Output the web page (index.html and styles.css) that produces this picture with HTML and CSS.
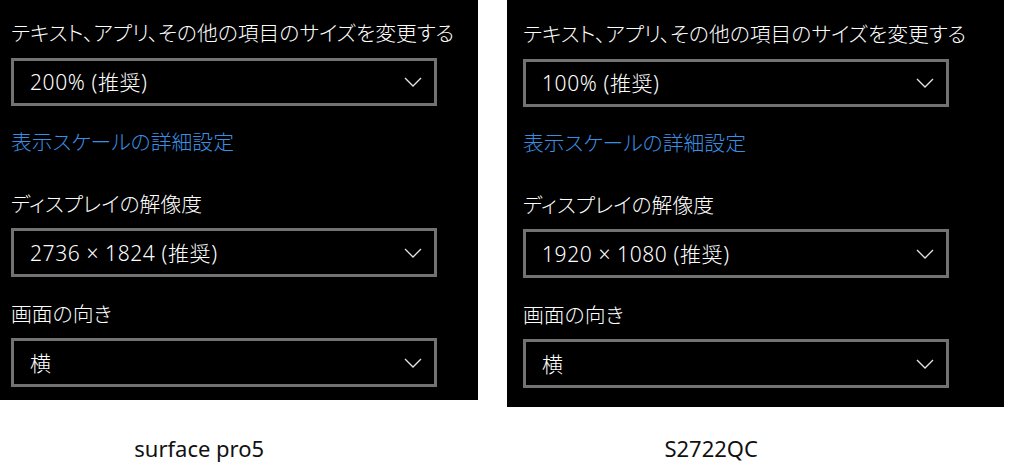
FILE: index.html
```html
<!DOCTYPE html>
<html lang="ja">
<head>
<meta charset="utf-8">
<title>Display settings comparison</title>
<link rel="stylesheet" href="styles.css">
</head>
<body>
<div class="row">
  <section class="panel panel-left">
    <div class="label title">テキスト、アプリ、その他の項目のサイズを変更する</div>
    <div class="combo combo-first"><span class="value">200% (推奨)</span><svg class="chev" viewBox="0 0 18 10" width="18" height="10"><path d="M1 1 L9 9 L17 1" fill="none" stroke="#e6e6e6" stroke-width="1.3"/></svg></div>
    <div class="link">表示スケールの詳細設定</div>
    <div class="label label-res">ディスプレイの解像度</div>
    <div class="combo"><span class="value">2736 × 1824 (推奨)</span><svg class="chev" viewBox="0 0 18 10" width="18" height="10"><path d="M1 1 L9 9 L17 1" fill="none" stroke="#e6e6e6" stroke-width="1.3"/></svg></div>
    <div class="label label-ori">画面の向き</div>
    <div class="combo"><span class="value">横</span><svg class="chev" viewBox="0 0 18 10" width="18" height="10"><path d="M1 1 L9 9 L17 1" fill="none" stroke="#e6e6e6" stroke-width="1.3"/></svg></div>
  </section>
  <section class="panel panel-right">
    <div class="label title">テキスト、アプリ、その他の項目のサイズを変更する</div>
    <div class="combo combo-first"><span class="value">100% (推奨)</span><svg class="chev" viewBox="0 0 18 10" width="18" height="10"><path d="M1 1 L9 9 L17 1" fill="none" stroke="#e6e6e6" stroke-width="1.3"/></svg></div>
    <div class="link">表示スケールの詳細設定</div>
    <div class="label label-res">ディスプレイの解像度</div>
    <div class="combo"><span class="value">1920 × 1080 (推奨)</span><svg class="chev" viewBox="0 0 18 10" width="18" height="10"><path d="M1 1 L9 9 L17 1" fill="none" stroke="#e6e6e6" stroke-width="1.3"/></svg></div>
    <div class="label label-ori">画面の向き</div>
    <div class="combo"><span class="value">横</span><svg class="chev" viewBox="0 0 18 10" width="18" height="10"><path d="M1 1 L9 9 L17 1" fill="none" stroke="#e6e6e6" stroke-width="1.3"/></svg></div>
  </section>
</div>
<div class="captions">
  <div class="caption caption-left">surface pro5</div>
  <div class="caption caption-right">S2722QC</div>
</div>
</body>
</html>
```
FILE: styles.css
```css
html, body {
  margin: 0;
  padding: 0;
  background: #ffffff;
}
body {
  width: 1024px;
  height: 474px;
  overflow: hidden;
  font-family: "Noto Sans CJK JP", "Noto Sans", sans-serif;
}
.row {
  display: flex;
  align-items: flex-start;
  gap: 29px;
}
.panel {
  background: #000000;
  color: #ffffff;
  display: flex;
  flex-direction: column;
  align-items: flex-start;
  box-sizing: border-box;
}
.panel-left {
  width: 478px;
  height: 400px;
  padding-left: 11px;
}
.panel-right {
  width: 497px;
  height: 407px;
  padding-left: 16px;
  padding-top: 1px;
}
.label, .link {
  font-size: 20.8px;
  line-height: 30px;
  font-weight: 300;
  font-feature-settings: "palt";
  white-space: nowrap;
}
.title { margin-top: 17px; }
.link {
  color: #3a8fe2;
  margin-top: 20px;
}
.label-res { margin-top: 32px; }
.label-ori { margin-top: 21px; }
.combo {
  box-sizing: border-box;
  width: 426px;
  height: 49px;
  border: 3px solid #727272;
  margin-top: 10px;
  display: flex;
  align-items: center;
  justify-content: space-between;
  padding: 0 12px 0 16px;
}
.combo-first {
  margin-top: 11px;
  height: 48px;
}
.value {
  font-family: "Noto Sans", "Noto Sans CJK JP", sans-serif;
  font-size: 21px;
  font-weight: 300;
  letter-spacing: 0.6px;
  line-height: 26px;
  color: #ffffff;
  white-space: nowrap;
}
.chev { display: block; }
.captions {
  display: flex;
}
.caption {
  font-family: "Noto Sans", "Liberation Sans", sans-serif;
  font-size: 22px;
  line-height: 26px;
  color: #111111;
  text-align: center;
  margin-top: 28px;
}
.caption-left { width: 400px; }
.caption-right { width: 628px; }
```
